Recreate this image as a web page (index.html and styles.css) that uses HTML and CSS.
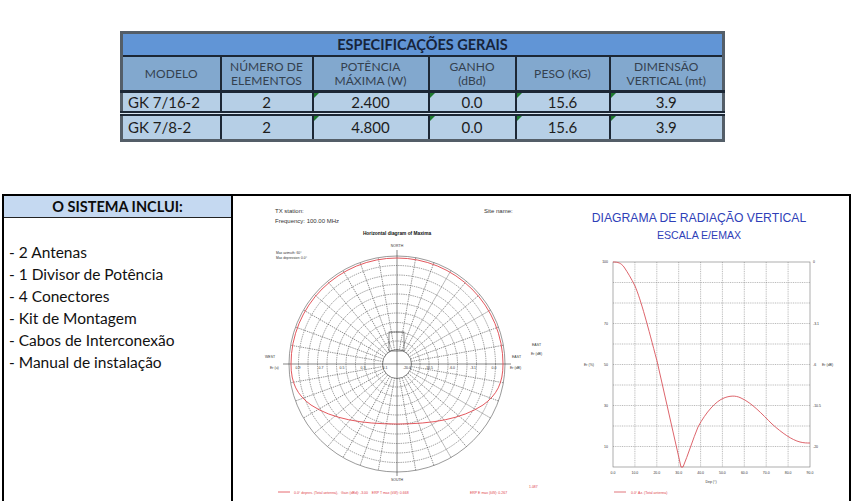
FILE: index.html
```html
<!DOCTYPE html>
<html lang="pt">
<head>
<meta charset="utf-8">
<title>Especificações</title>
<link rel="stylesheet" href="styles.css">
</head>
<body>
<div class="spec-wrap">
  <table class="spec">
    <colgroup>
      <col class="c1"><col class="c2"><col class="c3"><col class="c4"><col class="c5"><col class="c6">
    </colgroup>
    <tr class="title-row"><th colspan="6">ESPECIFICAÇÕES GERAIS</th></tr>
    <tr class="head-row">
      <th>MODELO</th>
      <th>NÚMERO DE<br>ELEMENTOS</th>
      <th>POTÊNCIA<br>MÁXIMA (W)</th>
      <th>GANHO<br>(dBd)</th>
      <th>PESO (KG)</th>
      <th>DIMENSÃO<br>VERTICAL (mt)</th>
    </tr>
    <tr class="data-row r1">
      <td class="model">GK 7/16-2</td>
      <td>2</td>
      <td class="flag">2.400</td>
      <td class="flag">0.0</td>
      <td class="flag">15.6</td>
      <td class="flag">3.9</td>
    </tr>
    <tr class="data-row r2">
      <td class="model">GK 7/8-2</td>
      <td>2</td>
      <td class="flag">4.800</td>
      <td class="flag">0.0</td>
      <td class="flag">15.6</td>
      <td class="flag">3.9</td>
    </tr>
  </table>
</div>

<div class="bottom">
  <div class="incl">
    <div class="incl-head">O SISTEMA INCLUI:</div>
    <ul class="incl-list">
      <li>- 2 Antenas</li>
      <li>- 1 Divisor de Potência</li>
      <li>- 4 Conectores</li>
      <li>- Kit de Montagem</li>
      <li>- Cabos de Interconexão</li>
      <li>- Manual de instalação</li>
    </ul>
  </div>
  <div class="diagrams">
    <svg class="diag-svg" width="616" height="305" viewBox="233 197 616 305" xmlns="http://www.w3.org/2000/svg">
      <!-- ============ POLAR (HORIZONTAL) DIAGRAM ============ -->
      <g font-family="Liberation Sans, Arial, sans-serif" fill="#333">
        <text x="275" y="214" font-size="6">TX station:</text>
        <text x="275" y="224" font-size="6">Frequency: 100.00 MHz</text>
        <text x="484" y="214" font-size="6">Site name:</text>
        <text x="397" y="236" font-size="4.8" font-weight="bold" fill="#111" text-anchor="middle">Horizontal diagram of Maxima</text>
        <text x="397" y="248" font-size="3.5" text-anchor="middle">NORTH</text>
        <text x="276" y="255" font-size="3.3">Max azimuth: 60°</text>
        <text x="276" y="260" font-size="3.3">Max depression: 0.0°</text>
        <text x="397" y="482" font-size="3.5" text-anchor="middle">SOUTH</text>
        <text x="265" y="359" font-size="3.5">WEST</text>
        <text x="270" y="370" font-size="3.5">Er (u)</text>
        <text x="532" y="347" font-size="3.5">EAST</text>
        <text x="531" y="356" font-size="3.5">Er (dB)</text>
        <text x="512" y="359" font-size="3.5">EAST</text>
        <text x="510" y="370" font-size="3.5">Er (dB)</text>
      </g>
      <!-- rings -->
      <g fill="none" stroke="#3a3a3a" stroke-width="0.5" stroke-dasharray="1.4 0.9">
        <circle cx="397" cy="365" r="98.5"/>
        <circle cx="397" cy="365" r="89"/>
        <circle cx="397" cy="365" r="79.5"/>
        <circle cx="397" cy="365" r="70"/>
        <circle cx="397" cy="365" r="60.5"/>
        <circle cx="397" cy="365" r="51"/>
        <circle cx="397" cy="365" r="41.5"/>
        <circle cx="397" cy="365" r="32"/>
        <circle cx="397" cy="365" r="23"/>
      </g>
      <!-- radial lines every 10 degrees -->
      <g stroke="#3a3a3a" stroke-width="0.5" stroke-dasharray="1.4 0.9">
        <line x1="397" y1="257" x2="397" y2="473" transform="rotate(10 397 365)"/>
        <line x1="397" y1="257" x2="397" y2="473" transform="rotate(20 397 365)"/>
        <line x1="397" y1="257" x2="397" y2="473" transform="rotate(30 397 365)"/>
        <line x1="397" y1="257" x2="397" y2="473" transform="rotate(40 397 365)"/>
        <line x1="397" y1="257" x2="397" y2="473" transform="rotate(50 397 365)"/>
        <line x1="397" y1="257" x2="397" y2="473" transform="rotate(60 397 365)"/>
        <line x1="397" y1="257" x2="397" y2="473" transform="rotate(70 397 365)"/>
        <line x1="397" y1="257" x2="397" y2="473" transform="rotate(80 397 365)"/>
        <line x1="397" y1="257" x2="397" y2="473" transform="rotate(100 397 365)"/>
        <line x1="397" y1="257" x2="397" y2="473" transform="rotate(110 397 365)"/>
        <line x1="397" y1="257" x2="397" y2="473" transform="rotate(120 397 365)"/>
        <line x1="397" y1="257" x2="397" y2="473" transform="rotate(130 397 365)"/>
        <line x1="397" y1="257" x2="397" y2="473" transform="rotate(140 397 365)"/>
        <line x1="397" y1="257" x2="397" y2="473" transform="rotate(150 397 365)"/>
        <line x1="397" y1="257" x2="397" y2="473" transform="rotate(160 397 365)"/>
        <line x1="397" y1="257" x2="397" y2="473" transform="rotate(170 397 365)"/>
      </g>
      <circle cx="397" cy="365" r="108" fill="none" stroke="#555" stroke-width="0.6"/>
      <circle cx="397" cy="365" r="14.5" fill="#fff" stroke="#333" stroke-width="0.6"/>
      <rect x="389" y="333" width="15" height="19" fill="none" stroke="#333" stroke-width="0.6"/>
      <!-- main axes -->
      <g stroke="#333" stroke-width="0.6">
        <line x1="397" y1="251" x2="397" y2="477"/>
        <line x1="283" y1="365" x2="511" y2="365"/>
      </g>
      <!-- axis tick labels -->
      <g font-family="Liberation Sans, Arial, sans-serif" font-size="3.5" fill="#333" text-anchor="middle">
        <text x="298" y="370">0.9</text>
        <text x="321" y="370">0.7</text>
        <text x="342" y="370">0.5</text>
        <text x="363" y="370">0.3</text>
        <text x="385" y="370">0.1</text>
        <text x="407" y="370">-20.0</text>
        <text x="429" y="370">-10.5</text>
        <text x="452" y="370">-6.0</text>
        <text x="473" y="370">-3.1</text>
        <text x="494" y="370">0.0</text>
      </g>
      <!-- pattern -->
      <path d="M291,365 A106,106 0 0 1 503,365 C503,384 497,396 483,406 C462,420 432,425 397,425 C362,425 332,420 311,406 C297,396 291,384 291,365 Z" fill="none" stroke="#e0454c" stroke-width="0.9"/>
      <!-- legend -->
      <line x1="278" y1="493" x2="290" y2="493" stroke="#e0454c" stroke-width="0.8"/>
      <g font-family="Liberation Sans, Arial, sans-serif" font-size="3.5" fill="#e0454c">
        <text x="294" y="494.5">0.0° depres. (Total antenna),&#160;&#160;&#160;Gain (dBd): -3.00&#160;&#160;&#160;&#160;ERP T max (kW): 0.668</text>
        <text x="470" y="494.5">ERP E max (kW): 0.267</text>
        <text x="529" y="489">1.087</text>
      </g>

      <!-- ============ VERTICAL DIAGRAM ============ -->
      <g font-family="Liberation Sans, Arial, sans-serif" fill="#2f3fb8" text-anchor="middle">
        <text x="699" y="223" font-size="12.2">DIAGRAMA DE RADIAÇÃO VERTICAL</text>
        <text x="699" y="240" font-size="10.6">ESCALA E/EMAX</text>
      </g>
      <g stroke="#666" stroke-width="0.45" stroke-dasharray="1 0.8">
        <line x1="634.9" y1="263" x2="634.9" y2="468"/>
        <line x1="656.8" y1="263" x2="656.8" y2="468"/>
        <line x1="678.7" y1="263" x2="678.7" y2="468"/>
        <line x1="700.6" y1="263" x2="700.6" y2="468"/>
        <line x1="722.4" y1="263" x2="722.4" y2="468"/>
        <line x1="744.3" y1="263" x2="744.3" y2="468"/>
        <line x1="766.2" y1="263" x2="766.2" y2="468"/>
        <line x1="788.1" y1="263" x2="788.1" y2="468"/>
        <line x1="613" y1="283.5" x2="810" y2="283.5"/>
        <line x1="613" y1="304" x2="810" y2="304"/>
        <line x1="613" y1="324.5" x2="810" y2="324.5"/>
        <line x1="613" y1="345" x2="810" y2="345"/>
        <line x1="613" y1="365.5" x2="810" y2="365.5"/>
        <line x1="613" y1="386" x2="810" y2="386"/>
        <line x1="613" y1="406.5" x2="810" y2="406.5"/>
        <line x1="613" y1="427" x2="810" y2="427"/>
        <line x1="613" y1="447.5" x2="810" y2="447.5"/>
      </g>
      <rect x="613" y="263" width="197" height="205" fill="none" stroke="#777" stroke-width="0.6"/>
      <path d="M613,263 C618,263 621,264 624,268 C628,274 631,279 635,287 C641,301 648,328 657,362 L681,468 L683,468 C688,456 693,440 698,428 C706,413 716,402 724,399 C729,397 735,396 741,399 C752,404 762,415 772,425 C782,434 792,441 800,443 C804,444 807,444 810,444" fill="none" stroke="#d9535b" stroke-width="0.9"/>
      <g font-family="Liberation Sans, Arial, sans-serif" font-size="3.5" fill="#333">
        <text x="608" y="264" text-anchor="end">100</text>
        <text x="608" y="326" text-anchor="end">70</text>
        <text x="608" y="367" text-anchor="end">50</text>
        <text x="608" y="408" text-anchor="end">30</text>
        <text x="608" y="449" text-anchor="end">10</text>
        <text x="584" y="367">Er (%)</text>
        <text x="813" y="264">0</text>
        <text x="813" y="326">-3.1</text>
        <text x="813" y="367">-6</text>
        <text x="822" y="367">Er (dB)</text>
        <text x="813" y="408">-10.5</text>
        <text x="813" y="449">-20</text>
      </g>
      <g font-family="Liberation Sans, Arial, sans-serif" font-size="3.5" fill="#333" text-anchor="middle">
        <text x="613" y="474.5">0.0</text>
        <text x="634.9" y="474.5">10.0</text>
        <text x="656.8" y="474.5">20.0</text>
        <text x="678.7" y="474.5">30.0</text>
        <text x="700.6" y="474.5">40.0</text>
        <text x="722.4" y="474.5">50.0</text>
        <text x="744.3" y="474.5">60.0</text>
        <text x="766.2" y="474.5">70.0</text>
        <text x="788.1" y="474.5">80.0</text>
        <text x="810" y="474.5">90.0</text>
        <text x="711" y="483.5">Dep (°)</text>
      </g>
      <line x1="614" y1="493" x2="626" y2="493" stroke="#d9535b" stroke-width="0.8"/>
      <text x="631" y="494.5" font-family="Liberation Sans, Arial, sans-serif" font-size="3.5" fill="#e0454c">0.0° Az. (Total antenna)</text>
    </svg>
  </div>
</div>
</body>
</html>
```

FILE: styles.css
```css
html, body {
  margin: 0;
  padding: 0;
  background: #ffffff;
}

body {
  width: 856px;
  height: 502px;
  overflow: hidden;
  font-family: "Lato", "Open Sans", sans-serif;
  color: #111;
}

/* ---------- specification table ---------- */
.spec-wrap {
  padding: 31px 0 0 120px;
}

.spec {
  border-collapse: collapse;
  border: 3px solid #545e68;
  width: 605px;
  table-layout: fixed;
  background: #d7e4f0;
}

.c1 { width: 99px; }
.c2 { width: 92px; }
.c3 { width: 116px; }
.c4 { width: 87px; }
.c5 { width: 94px; }
.c6 { width: 114px; }

.spec th,
.spec td {
  padding: 0;
  text-align: center;
  border: 2px solid #1c2735;
}

.title-row th {
  background: #6195d6;
  height: 21px;
  font-weight: 700;
  font-size: 14.5px;
  color: #17243a;
  line-height: 21px;
  border-bottom: 1px solid #1c2735;
}

.head-row th {
  background: #82a8ce;
  height: 33px;
  font-weight: 400;
  font-size: 12px;
  line-height: 14px;
  color: #34414f;
  letter-spacing: 0.1px;
  border-bottom: 3px solid #1c2735;
}

.data-row td {
  background: #b6cfe6;
  font-size: 15px;
  color: #1d1d1d;
  position: relative;
}

.r1 td {
  height: 18px;
  line-height: 18px;
  border-bottom: 5px double #1c2735;
}

.r2 td {
  height: 23px;
  line-height: 23px;
}

.data-row td.model {
  text-align: left;
  padding-left: 5px;
}

.flag::before {
  content: "";
  position: absolute;
  left: 0;
  top: 0;
  border-top: 5px solid #1f7a2f;
  border-right: 5px solid transparent;
}

/* ---------- bottom section ---------- */
.bottom {
  display: flex;
  margin-top: 52px;
  padding-left: 2px;
  height: 307px;
}

.incl {
  width: 231px;
  box-sizing: border-box;
  border: 2px solid #000;
  border-bottom: none;
  flex: none;
}

.incl-head {
  background: #c5d9f1;
  height: 21px;
  line-height: 22px;
  border-bottom: 1px solid #222;
  text-align: center;
  font-weight: 700;
  font-size: 14.5px;
  color: #0c0c0c;
}

.incl-list {
  list-style: none;
  margin: 0;
  padding: 23px 0 0 5px;
}

.incl-list li {
  font-size: 15.5px;
  line-height: 22px;
  color: #111;
}

.diagrams {
  width: 618px;
  box-sizing: border-box;
  border-top: 2px solid #000;
  border-right: 2px solid #000;
  flex: none;
}

.diag-svg {
  display: block;
}
```
